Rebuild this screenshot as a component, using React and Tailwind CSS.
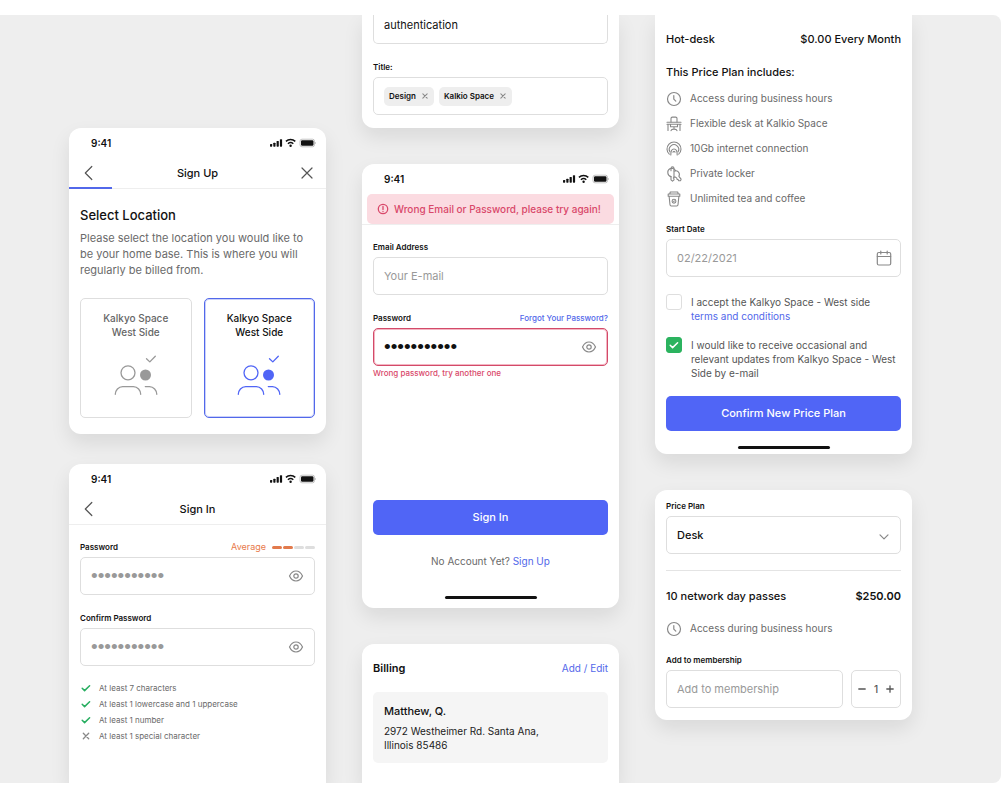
import React, { useState } from "react";

function Svg({ size = "size-4", box = "0 0 16 16", children, ...rest }) {
  return (
    <svg
      className={`${size} shrink-0`}
      viewBox={box}
      fill="none"
      stroke="currentColor"
      strokeLinecap="round"
      strokeLinejoin="round"
      aria-hidden="true"
      {...rest}
    >
      {children}
    </svg>
  );
}

const EyeIcon = () => (
  <Svg strokeWidth="1.2">
    <path d="M1.5 8C3 4.8 5.2 3 8 3s5 1.8 6.5 5c-1.500 3.200-3.700 5-6.500 5S3 11.200 1.500 8Z" />
    <circle cx="8" cy="8" r="2.200" />
  </Svg>
);

const ClockIcon = () => (
  <Svg strokeWidth="1.2">
    <circle cx="8" cy="8" r="6.500" />
    <path d="M7.800 4.500V8.200l2 2" />
  </Svg>
);

const DeskIcon = () => (
  <Svg strokeWidth="1.100">
    <path d="M5 6V2.500a1.400 1.400 0 0 1 1.400-1.400h3.200a1.400 1.400 0 0 1 1.400 1.400V6" />
    <path d="M1 6.200h14M1 8.200h14M2 8.200v6.300M14 8.200v6.300M4.500 8.200v2.600h7V8.200M8 10.800v2.300M5 14.600c.2-1 1.200-1.500 3-1.500s2.800.5 3 1.500" />
  </Svg>
);

const SignalIcon = () => (
  <Svg strokeWidth="1.100">
    <path d="M3.300 13.200a7 7 0 1 1 9.400 0" />
    <path d="M4 10.900a4.700 4.700 0 1 1 8 0" />
    <path d="M4.800 14c0-2 .1-3.400.7-4.500a2.900 2.900 0 0 1 5 0c.6 1.100.7 2.500.7 4.500" />
    <path d="M7 11.200a1 1 0 0 1 2 0" />
  </Svg>
);

const KeysIcon = () => (
  <Svg strokeWidth="1.100">
    <path d="M5 10.600A4.300 4.300 0 0 1 3.800 2.800a4.300 4.300 0 0 1 5.800 2" />
    <path d="M5 10.600v3.200l1.500 1.400L8 13.800v-1l-.7-.8.7-.8V6" />
    <path d="M5 4.800V2.400a1.500 1.500 0 0 1 3 0V5" />
    <path d="M8 5.200a3.700 3.700 0 0 1 4.900 5.100l2.200 2.900-.5 1.500-1.900.1-.5-1.200-1.100-.1-.3-1.300-1.300-1.100H8" />
  </Svg>
);

const CupIcon = () => (
  <Svg strokeWidth="1.100">
    <path d="M3.700 3 4.300 1h7.400l.6 2M2.200 3h11.600v2.200H2.200ZM3.100 5.200l.9 8.600a1.300 1.300 0 0 0 1.300 1.200h5.400a1.300 1.300 0 0 0 1.300-1.200l.9-8.600" />
    <circle cx="8" cy="10.200" r="1.900" />
    <path d="M7.700 10.500l.6-.6" />
  </Svg>
);

const CalendarIcon = () => (
  <Svg strokeWidth="1.200">
    <rect x="1.300" y="2.500" width="13.400" height="12.500" rx="1.500" />
    <path d="M1.300 6.500h13.400M4.800 1v3M11.200 1v3" />
  </Svg>
);

const CheckIcon = () => (
  <Svg size="size-2.5" box="0 0 10 10" strokeWidth="1.500">
    <path d="m1.200 5.200 2.400 2.400 5-4.800" />
  </Svg>
);

const CrossIcon = ({ size = "size-2.5" }) => (
  <Svg size={size} box="0 0 10 10" strokeWidth="1.300">
    <path d="m2.300 2.300 5.400 5.400M7.700 2.300 2.300 7.700" />
  </Svg>
);

const PeopleIcon = () => (
  <Svg size="h-[42px] w-11" box="0 0 44 42" strokeWidth="1.300">
    <path d="m32.500 4.700 3.300 3.200 5.500-5.700" />
    <circle cx="14" cy="18.800" r="7" />
    <circle cx="31.500" cy="21" r="5.500" fill="currentColor" stroke="none" />
    <path d="M1.300 40.300c0-4 3.200-7.700 7.400-7.700h10.700c4.200 0 7.300 3.700 7.300 7.700M31.300 32.600h4.200c4 0 7.300 3.700 7.300 7.700" />
  </Svg>
);

function StatusBar() {
  return (
    <div className="flex h-[30px] items-center justify-between pl-[22px] pr-2.5">
      <span className="text-[10px] font-semibold leading-4">9:41</span>
      <svg className="h-2.5 w-[46px]" viewBox="0 0 46 10" aria-hidden="true">
        <g fill="#111">
          <rect x="0" y="6" width="2.200" height="2.700" rx=".6" />
          <rect x="3.300" y="4.700" width="2.200" height="4" rx=".6" />
          <rect x="6.600" y="3" width="2.200" height="5.700" rx=".6" />
          <rect x="9.900" y="1.200" width="2.200" height="7.500" rx=".6" />
          <circle cx="20.600" cy="7.800" r="1.200" />
          <rect x="31" y="2.200" width="12.500" height="5.600" rx="1.200" />
        </g>
        <g fill="none" stroke="#111" strokeWidth="1.500">
          <path d="M15.900 3.400a7 7 0 0 1 9.400 0" />
          <path d="M17.900 5.700a4.200 4.200 0 0 1 5.400 0" />
        </g>
        <rect x="30" y="1.200" width="14.500" height="7.600" rx="2" fill="none" stroke="#aaa" strokeWidth=".7" />
        <path d="M45.300 4v2" stroke="#aaa" strokeWidth=".7" />
      </svg>
    </div>
  );
}

function Card({ className = "", children }) {
  return (
    <section className={`bg-white shadow-[0_9px_20px_rgba(0,0,0,0.09)] ${className}`}>{children}</section>
  );
}

function NavBar({ title, close, progress }) {
  return (
    <header>
      <div className="grid h-[30px] grid-cols-[1fr_auto_1fr] items-center px-3">
        <button type="button" aria-label="Back" className="justify-self-start text-[#555]">
          <Svg strokeWidth="1.200">
            <path d="M10.800 1.500 4.300 8l6.500 6.500" />
          </Svg>
        </button>
        <h2 className="text-[11px] font-medium leading-4">{title}</h2>
        {close && (
          <button type="button" aria-label="Close" className="justify-self-end text-[#555]">
            <Svg size="size-3.5" box="0 0 14 14" strokeWidth="1.200">
              <path d="m2 2 10 10M12 2 2 12" />
            </Svg>
          </button>
        )}
      </div>
      <div className="flex h-px items-end bg-[#eeeeee]">
        {progress && <div className="h-0.5 w-1/6 bg-[#5268ea]" />}
      </div>
    </header>
  );
}

const LABEL = "block text-[8px] font-semibold leading-3";
const FIELD = "flex h-[38px] items-center rounded-[5px] border border-[#dedede] bg-white";

function PasswordField({ id, label, aside, error, tone = "text-[#999]" }) {
  const [shown, setShown] = useState(false);
  return (
    <div>
      <div className="mb-1 flex h-3 items-center justify-between">
        <label htmlFor={id} className={LABEL}>{label}</label>
        {aside}
      </div>
      <div className={error ? "flex h-[38px] items-center rounded-[5px] border border-[#d34a69] bg-white ring-1 ring-inset ring-[#f3b6c3]" : FIELD}>
        <input
          id={id}
          type={shown ? "text" : "password"}
          defaultValue="kalkyospace"
          autoComplete="off"
          className={`h-full min-w-0 flex-1 bg-transparent pl-2.5 outline-none ${tone} ${
            shown ? "text-[11px]" : "font-['Liberation_Sans',sans-serif] text-[19px]"
          }`}
        />
        <button type="button" aria-label="Show password" onClick={() => setShown(!shown)} className="px-2.5 text-[#888]">
          <EyeIcon />
        </button>
      </div>
      {error && <p className="mt-px text-[8px] font-medium leading-3 text-[#d9486a]">{error}</p>}
    </div>
  );
}

function PrimaryButton({ children, className = "" }) {
  return (
    <button type="button" className={`h-[35px] w-full rounded-[5px] bg-[#5065f6] text-[11px] font-medium text-white ${className}`}>
      {children}
    </button>
  );
}

const HomeBar = ({ className }) => <div className={`mx-auto h-[3px] w-[92px] rounded-full bg-[#111] ${className}`} />;

function Location({ selected, onSelect }) {
  return (
    <button
      type="button"
      aria-pressed={selected}
      onClick={onSelect}
      className={`flex h-[120px] flex-col items-center rounded-[5px] pt-3 text-[10px] font-medium leading-[14px] ${
        selected ? "border border-[#5268ea] ring-1 ring-inset ring-[#5268ea]/30" : "border border-[#dedede] text-[#666]"
      }`}
    >
      <span>Kalkyo Space<br />West Side</span>
      <span className={`mt-[15px] ${selected ? "text-[#5065f6]" : "text-[#999]"}`}><PeopleIcon /></span>
    </button>
  );
}

function SignUpCard() {
  const [choice, setChoice] = useState(1);
  return (
    <Card className="rounded-xl pb-4">
      <StatusBar />
      <NavBar title="Sign Up" close progress />
      <div className="px-[11px] pt-4">
        <h1 className="text-[13px] font-medium leading-5">Select Location</h1>
        <p className="mt-[5px] text-[11px] leading-4 text-[#6a6a6a]">
          Please select the location you would like to be your home base. This is where you will regularly be billed from.
        </p>
        <div className="mt-5 grid grid-cols-2 gap-3">
          {[0, 1].map((n) => (
            <Location key={n} selected={choice === n} onSelect={() => setChoice(n)} />
          ))}
        </div>
      </div>
    </Card>
  );
}

const RULES = [
  ["At least 7 characters", true],
  ["At least 1 lowercase and 1 uppercase", true],
  ["At least 1 number", true],
  ["At least 1 special character", false],
];

function NewPasswordCard() {
  const strength = (
    <span className="flex items-center gap-1.5 text-[9px] leading-3 text-[#e8794a]">
      Average
      <span className="flex gap-px">
        <span className="h-[3px] w-2.5 rounded-full bg-[#e27a4c]" />
        <span className="h-[3px] w-2.5 rounded-full bg-[#e27a4c]" />
        <span className="h-[3px] w-2.5 rounded-full bg-[#dedede]" />
        <span className="h-[3px] w-2.5 rounded-full bg-[#dedede]" />
      </span>
    </span>
  );
  return (
    <Card className="flex-1 rounded-t-xl">
      <StatusBar />
      <NavBar title="Sign In" />
      <div className="flex flex-col gap-[17px] px-[11px] pt-4">
        <PasswordField id="new-password" label="Password" aside={strength} />
        <PasswordField id="confirm-password" label="Confirm Password" />
      </div>
      <ul className="mt-[14px] px-3 text-[8px] leading-4 text-[#6a6a6a]">
        {RULES.map(([text, met]) => (
          <li key={text} className="flex items-center gap-2">
            <span className={met ? "text-[#27ae60]" : "text-[#888]"}>{met ? <CheckIcon /> : <CrossIcon />}</span>
            {text}
          </li>
        ))}
      </ul>
    </Card>
  );
}

function TitleCard() {
  const [tags, setTags] = useState(["Design", "Kalkio Space"]);
  return (
    <Card className="rounded-b-xl px-[11px] pb-[13px]">
      <textarea
        aria-label="Description"
        rows={1}
        defaultValue="authentication"
        className="block h-[29px] w-full resize-none rounded-b-[5px] border border-t-0 border-[#dedede] px-2.5 pt-0.5 text-[11px] leading-4 outline-none"
      />
      <p className="mb-1 mt-[17px] text-[8px] font-semibold leading-3">Title:</p>
      <div className={`${FIELD} gap-[5px] px-2.5`}>
        {tags.map((t) => (
          <span key={t} className="flex h-[19px] items-center gap-[5px] rounded-[5px] bg-[#eeeeee] px-[5px] text-[8px] font-semibold">
            {t}
            <button type="button" aria-label={`Remove ${t}`} className="text-[#888]" onClick={() => setTags(tags.filter((x) => x !== t))}>
              <CrossIcon size="size-2" />
            </button>
          </span>
        ))}
      </div>
    </Card>
  );
}

function SignInCard() {
  return (
    <Card className="rounded-xl pb-[9px]">
      <StatusBar />
      <div role="alert" className="mx-[5px] flex h-[30px] items-center gap-[5px] rounded-[5px] bg-[#fbdbe1] px-2.5 text-[10px] font-medium text-[#d9486a]">
        <Svg size="size-3" box="0 0 12 12" strokeWidth="1.300">
          <circle cx="6" cy="6" r="4.700" />
          <path d="M6 3.400v3M6 8.400v.1" />
        </Svg>
        Wrong Email or Password, please try again!
      </div>
      <div className="h-px bg-[#eeeeee]" />
      <div className="px-[11px] pt-4">
        <label htmlFor="email" className={`${LABEL} mb-1`}>Email Address</label>
        <div className={`${FIELD} mb-[17px]`}>
          <input id="email" type="email" placeholder="Your E-mail" className="h-full min-w-0 flex-1 bg-transparent px-2.5 text-[11px] outline-none placeholder:text-[#999]" />
        </div>
        <PasswordField
          id="password"
          label="Password"
          tone="text-[#111]"
          error="Wrong password, try another one"
          aside={<a href="#forgot" className="text-[8px] font-medium leading-3 text-[#5268ea]">Forgot Your Password?</a>}
        />
        <PrimaryButton className="mt-[121px]">Sign In</PrimaryButton>
        <p className="mt-[18px] text-center text-[10px] leading-4 text-[#6a6a6a]">
          No Account Yet? <a href="#signup" className="text-[#5268ea]">Sign Up</a>
        </p>
      </div>
      <HomeBar className="mt-[27px]" />
    </Card>
  );
}

function BillingCard() {
  return (
    <Card className="flex-1 rounded-t-xl px-[11px] pt-4">
      <div className="flex items-center justify-between leading-4">
        <h2 className="text-[11px] font-semibold">Billing</h2>
        <a href="#edit" className="text-[10px] text-[#5268ea]">Add / Edit</a>
      </div>
      <address className="mt-4 rounded-[5px] bg-[#f5f5f5] p-[11px] not-italic">
        <p className="text-[11px] font-medium leading-4">Matthew, Q.</p>
        <p className="mt-[5px] text-[10px] leading-[14px] text-[#222]">2972 Westheimer Rd. Santa Ana,<br />Illinois 85486</p>
      </address>
    </Card>
  );
}

const PERKS = [
  ["Access during business hours", ClockIcon],
  ["Flexible desk at Kalkio Space", DeskIcon],
  ["10Gb internet connection", SignalIcon],
  ["Private locker", KeysIcon],
  ["Unlimited tea and coffee", CupIcon],
];

function Perk({ text, icon: Icon }) {
  return (
    <li className="flex h-[25px] items-center gap-2 text-[10px] text-[#6a6a6a]">
      <span className="text-[#888]"><Icon /></span>
      {text}
    </li>
  );
}

function Consent({ id, defaultChecked, children }) {
  return (
    <div className="flex items-start gap-[9px]">
      <span className="grid shrink-0">
        <input
          id={id}
          type="checkbox"
          defaultChecked={defaultChecked}
          className="peer col-start-1 row-start-1 size-4 appearance-none rounded-[3px] border border-[#dedede] bg-white checked:border-[#2bb35f] checked:bg-[#2bb35f]"
        />
        <span className="pointer-events-none invisible col-start-1 row-start-1 self-center justify-self-center text-white peer-checked:visible">
          <CheckIcon />
        </span>
      </span>
      <label htmlFor={id} className="mt-px text-[10px] leading-[14px] text-[#555]">{children}</label>
    </div>
  );
}

function PlanCard() {
  return (
    <Card className="rounded-b-xl px-[11px] pb-[5px] pt-4">
      <div className="flex justify-between text-[11px] font-medium leading-4">
        <h2>Hot-desk</h2>
        <p>$0.00 Every Month</p>
      </div>
      <h3 className="mt-[17px] text-[11px] font-medium leading-4">This Price Plan includes:</h3>
      <ul className="mt-1.5">
        {PERKS.map(([text, icon]) => <Perk key={text} text={text} icon={icon} />)}
      </ul>
      <label htmlFor="start" className={`${LABEL} mb-1 mt-3`}>Start Date</label>
      <div className={FIELD}>
        <input id="start" type="text" defaultValue="02/22/2021" className="h-full min-w-0 flex-1 bg-transparent px-2.5 text-[11px] text-[#999] outline-none" />
        <button type="button" aria-label="Pick a date" className="px-2 text-[#888]"><CalendarIcon /></button>
      </div>
      <div className="mt-[17px] flex flex-col gap-3.5">
        <Consent id="terms">
          I accept the Kalkyo Space - West side<br />
          <a href="#terms" className="text-[#5268ea]">terms and conditions</a>
        </Consent>
        <Consent id="updates" defaultChecked>
          I would like to receive occasional and relevant updates from Kalkyo Space - West Side by e-mail
        </Consent>
      </div>
      <PrimaryButton className="mt-4">Confirm New Price Plan</PrimaryButton>
      <HomeBar className="mt-[15px]" />
    </Card>
  );
}

function MembershipCard() {
  const [count, setCount] = useState(1);
  return (
    <Card className="rounded-xl px-[11px] pb-3 pt-2.5">
      <label htmlFor="plan" className={`${LABEL} mb-1`}>Price Plan</label>
      <div className={`${FIELD} grid`}>
        <select id="plan" className="col-start-1 row-start-1 h-full w-full appearance-none px-2.5 text-[11px] font-medium outline-none">
          <option>Desk</option>
          <option>Hot-desk</option>
        </select>
        <span className="pointer-events-none col-start-1 row-start-1 mr-2.5 mt-1 justify-self-end text-[#888]">
          <Svg size="size-3" box="0 0 12 12" strokeWidth="1.200">
            <path d="m2 3.800 4 4 4-4" />
          </Svg>
        </span>
      </div>
      <hr className="mt-4 border-[#e4e4e4]" />
      <div className="mt-[17px] flex justify-between text-[11px] leading-4">
        <p className="font-medium">10 network day passes</p>
        <p className="font-semibold">$250.00</p>
      </div>
      <ul className="mt-3"><Perk text="Access during business hours" icon={ClockIcon} /></ul>
      <label htmlFor="membership" className={`${LABEL} mb-1 mt-[13px]`}>Add to membership</label>
      <div className="flex gap-2">
        <div className={`${FIELD} min-w-0 flex-1`}>
          <input id="membership" type="text" placeholder="Add to membership" className="h-full min-w-0 flex-1 bg-transparent px-2.5 text-[11px] outline-none placeholder:text-[#999]" />
        </div>
        <div className={`${FIELD} w-[50px] justify-between px-1.5 text-[#555]`}>
          <button type="button" aria-label="Fewer" onClick={() => setCount(Math.max(1, count - 1))}>
            <Svg size="size-2" box="0 0 8 8" strokeWidth="1.300"><path d="M.8 4h6.400" /></Svg>
          </button>
          <output className="text-[10px] font-medium">{count}</output>
          <button type="button" aria-label="More" onClick={() => setCount(count + 1)}>
            <Svg size="size-2" box="0 0 8 8" strokeWidth="1.300"><path d="M.8 4h6.400M4 .8v6.400" /></Svg>
          </button>
        </div>
      </div>
    </Card>
  );
}

export default function App() {
  return (
    <div className="flex h-screen flex-col bg-white pb-[17px] pt-[15px] font-['Inter',sans-serif] text-[#111] antialiased">
      <main className="grid min-h-0 flex-1 grid-cols-3 gap-9 overflow-hidden rounded-r-lg bg-[#eeeeee] pl-[69px] pr-[89px]">
        <div className="flex min-w-0 flex-col gap-[30px] pt-[113px]">
          <SignUpCard />
          <NewPasswordCard />
        </div>
        <div className="flex min-w-0 flex-col gap-9">
          <TitleCard />
          <SignInCard />
          <BillingCard />
        </div>
        <div className="flex min-w-0 flex-col gap-9">
          <PlanCard />
          <MembershipCard />
        </div>
      </main>
    </div>
  );
}
